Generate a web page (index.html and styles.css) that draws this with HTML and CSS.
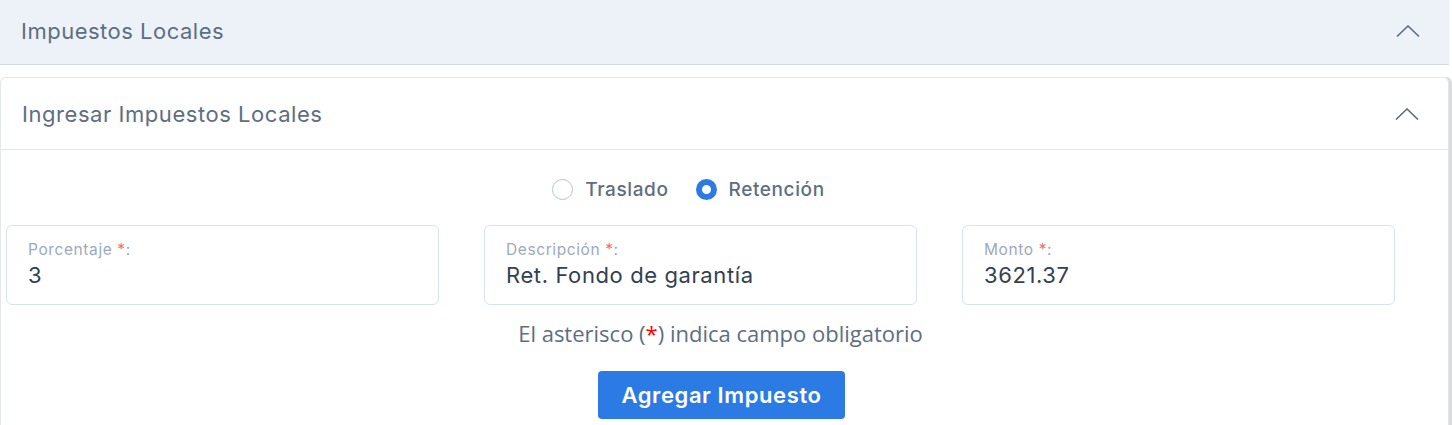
FILE: index.html
```html
<!DOCTYPE html>
<html lang="es">
<head>
<meta charset="utf-8">
<title>Impuestos Locales</title>
<link rel="stylesheet" href="styles.css">
</head>
<body>
<div class="page">
  <div class="panel-head">
    <span class="panel-title">Impuestos Locales</span>
    <svg class="chev" width="24" height="12" viewBox="0 0 24 12"><polyline points="1,11.5 12,1 23,11.5" fill="none" stroke="#5e6e82" stroke-width="1.6"/></svg>
  </div>
  <div class="card">
    <div class="card-head">
      <span class="card-title">Ingresar Impuestos Locales</span>
      <svg class="chev" width="24" height="12" viewBox="0 0 24 12"><polyline points="1,11.5 12,1 23,11.5" fill="none" stroke="#5e6e82" stroke-width="1.6"/></svg>
    </div>
    <div class="card-body">
      <div class="radios">
        <label class="radio"><span class="dot"></span>Traslado</label>
        <label class="radio"><span class="dot on"></span>Retención</label>
      </div>
      <div class="fields">
        <div class="field">
          <div class="flabel">Porcentaje <span class="req">*</span>:</div>
          <div class="fvalue">3</div>
        </div>
        <div class="field">
          <div class="flabel">Descripción <span class="req">*</span>:</div>
          <div class="fvalue">Ret. Fondo de garantía</div>
        </div>
        <div class="field">
          <div class="flabel">Monto <span class="req">*</span>:</div>
          <div class="fvalue">3621.37</div>
        </div>
      </div>
      <p class="note">El asterisco (<span class="star">*</span>) indica campo obligatorio</p>
      <div class="actions">
        <button class="btn">Agregar Impuesto</button>
      </div>
    </div>
  </div>
</div>
</body>
</html>
```

FILE: styles.css
```css
* { box-sizing: border-box; }
html, body { margin: 0; padding: 0; background: #fff; }
body {
  font-family: "Inter", "DejaVu Sans", sans-serif;
  color: #5e6e82;
  width: 1452px;
  height: 425px;
  overflow: hidden;
}
.page { width: 1452px; }
.panel-head {
  width: 1449px;
  height: 65px;
  background: #edf2f9;
  border-bottom: 1px solid #d5dae1;
  display: flex;
  align-items: center;
  justify-content: space-between;
  padding: 0 29px 3px 21px;
}
.panel-title { font-size: 22px; letter-spacing: 0.5px; }
.chev { display: block; }
.card {
  margin-top: 12px;
  width: 1449px;
  border: 1px solid #e3e6ea;
  border-bottom: none;
  border-radius: 6px 6px 0 0;
  box-shadow: 3px 0 0 #dcdcdc;
  height: 348px;
}
.card-head {
  height: 72px;
  border-bottom: 1px solid #e3e6ea;
  display: flex;
  align-items: center;
  justify-content: space-between;
  padding: 0 29px 0 21px;
}
.card-title { font-size: 22px; letter-spacing: 0.55px; }
.card-body { padding-top: 27px; }
.radios {
  display: flex;
  justify-content: center;
  gap: 27px;
  padding-right: 72px;
  height: 24px;
  align-items: center;
}
.radio {
  display: flex;
  align-items: center;
  gap: 12px;
  font-size: 19px;
  font-weight: 500;
  color: #5e6e82;
  letter-spacing: 0.6px;
}
.dot {
  width: 21px;
  height: 21px;
  border-radius: 50%;
  border: 1px solid #b6c1d2;
  background: #fff;
}
.dot.on {
  border: 6px solid #2c7be5;
}
.fields {
  display: grid;
  grid-template-columns: 433px 433px 433px;
  column-gap: 45px;
  padding-left: 5px;
  margin-top: 24px;
}
.field {
  height: 80px;
  border: 1px solid #d8e2ef;
  border-radius: 6px;
  padding: 13px 21px 0;
}
.flabel {
  font-size: 15.5px;
  color: #9da9bb;
  letter-spacing: 0.6px;
  line-height: 22px;
}
.req { color: #f56c6c; }
.fvalue {
  font-size: 22px;
  color: #344050;
  line-height: 28px;
  letter-spacing: 0.6px;
}
.note {
  margin: 14px 0 0;
  padding-right: 8px;
  text-align: center;
  font-family: "Open Sans", sans-serif;
  font-size: 22px;
  line-height: 28px;
  color: #5e6e82;
}
.star { color: #f00; }
.actions {
  display: flex;
  justify-content: center;
  margin-top: 24px;
  padding-right: 6px;
}
.btn {
  width: 247px;
  height: 48px;
  border: none;
  border-radius: 4px;
  background: #2c7be5;
  color: #fff;
  font-family: "Inter", sans-serif;
  font-size: 22px;
  font-weight: 600;
  letter-spacing: 0.6px;
}
```
